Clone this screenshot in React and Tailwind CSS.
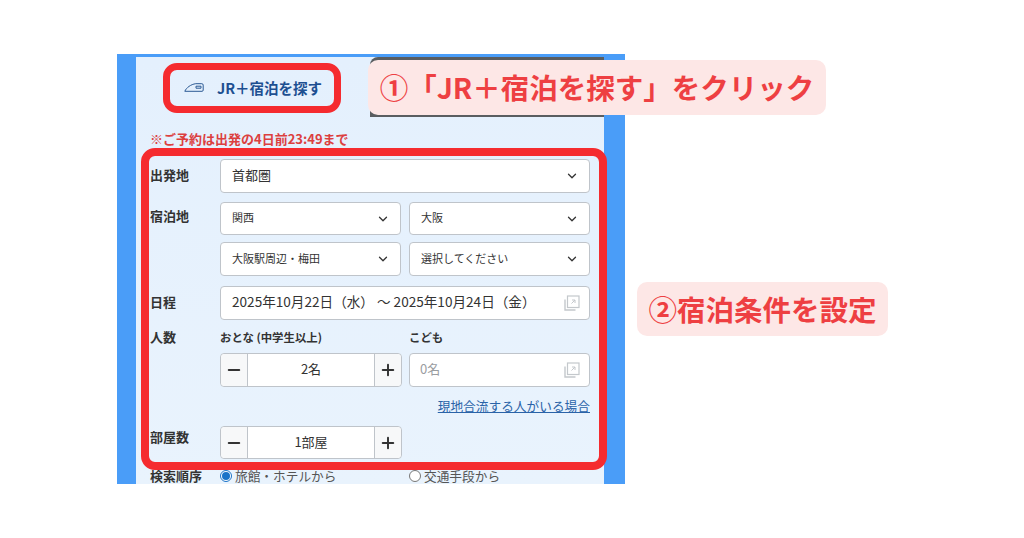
import { ChevronDown, Minus, Plus } from 'lucide-react'

const jp = 'font-["Noto_Sans_CJK_JP","Noto_Sans",sans-serif]'

function Label({ children, className = '' }) {
  return <div className={`w-[70px] shrink-0 text-[13px] font-bold leading-none text-[#333] ${className}`}>{children}</div>
}

function Select({ value, className = '', text = 'text-[11px]' }) {
  return (
    <div className={`flex items-center justify-between rounded-[4px] border border-[#bfc4ca] bg-white pl-[11px] pr-[10px] ${text} text-[#333] ${className}`}>
      <span className="pb-[2px]">{value}</span>
      <ChevronDown className="h-[14px] w-[14px] text-[#333]" strokeWidth={2.2} />
    </div>
  )
}

function CopyIcon() {
  return (
    <svg viewBox="0 0 16 16" className="h-[16px] w-[16px] text-[#c4c8cc]" fill="none" stroke="currentColor" strokeWidth="1">
      <path d="M1 4.500v10.500h10.500" strokeWidth="1.400" />
      <rect x="3.500" y="1" width="11.500" height="11.500" strokeWidth="1.200" />
      <path d="M7.500 8.500l3.500-3.500M8 5h3v3" />
    </svg>
  )
}

function Stepper({ value, height = 'h-[34px]' }) {
  return (
    <div className={`flex w-[182px] items-stretch rounded-[4px] border border-[#bfc4ca] bg-white text-[13px] text-[#333] ${height}`}>
      <div className="flex w-[27px] items-center justify-center rounded-l-[4px] border-r border-[#bfc4ca] bg-[#f7f8f9]">
        <Minus className="h-[18px] w-[18px] text-[#333]" strokeWidth={2.6} />
      </div>
      <div className="flex flex-1 items-center justify-center pb-[2px]">{value}</div>
      <div className="flex w-[27px] items-center justify-center rounded-r-[4px] border-l border-[#bfc4ca] bg-[#f7f8f9]">
        <Plus className="h-[18px] w-[18px] text-[#333]" strokeWidth={2.6} />
      </div>
    </div>
  )
}

export default function App() {
  return (
    <div className={`relative h-[538px] w-[1024px] overflow-hidden bg-white pl-[117px] pt-[54px] ${jp}`}>
      {/* Screenshot panel */}
      <div className="h-[430px] w-[508px] overflow-hidden border-x-[19px] border-t-[3px] border-r-[21px] border-x-[#4a9df8] border-t-[#4a9df8] bg-gradient-to-b from-[#e4f0fd] to-[#e9f3fd]">
        {/* Tabs */}
        <div className="flex h-[60px]">
          <div className="flex w-[234px] items-center justify-center gap-[13px] pt-[1px]">
            <svg viewBox="0 0 20 9" className="h-[9px] w-[20px] text-[#2c5a94]" fill="none" stroke="currentColor" strokeWidth="1">
              <path d="M.8 8.300c1.500-3.500 6-7 11-7.600h6c.9 0 1.400.5 1.400 1.400v5c0 .7-.4 1.200-1.200 1.200z" />
              <path d="M12 3.200h5v2h-5z" />
            </svg>
            <span className="text-[14.500px] font-bold text-[#1d4f91]">JR＋宿泊を探す</span>
          </div>
          <div className="flex-1 rounded-tl-[8px] bg-[#5a5d60]" />
        </div>

        <div className="pl-[14px] pt-[15px] text-[13px] font-bold leading-[14px] text-[#dc3f3f]">※ご予約は出発の4日前23:49まで</div>

        {/* Form */}
        <div className="px-[14px] pt-[13px]">
          <div className="flex items-center">
            <Label className="pb-[3px]">出発地</Label>
            <Select value="首都圏" text="text-[13px]" className="h-[34px] flex-1" />
          </div>
          <div className="mt-[9px] flex">
            <Label className="pt-[7px]">宿泊地</Label>
            <div className="grid flex-1 grid-cols-2 gap-x-[8px] gap-y-[7px]">
              <Select value="関西" className="h-[33px]" />
              <Select value="大阪" className="h-[33px]" />
              <Select value="大阪駅周辺・梅田" className="h-[34px]" />
              <Select value="選択してください" className="h-[34px]" />
            </div>
          </div>
          <div className="mt-[10px] flex items-center">
            <Label className="pb-[3px]">日程</Label>
            <div className="flex h-[34px] flex-1 items-center justify-between rounded-[4px] border border-[#bfc4ca] bg-white pl-[11px] pr-[9px] text-[13.600px] text-[#333]">
              <span className="pb-[3px]">2025年10月22日（水） ～ 2025年10月24日（金）</span>
              <CopyIcon />
            </div>
          </div>
          <div className="mt-[10px] flex">
            <Label>人数</Label>
            <div className="flex-1">
              <div className="grid grid-cols-2 gap-x-[8px]">
                <div>
                  <div className="text-[11.400px] font-bold leading-[14px] text-[#333]">おとな (中学生以上)</div>
                  <div className="mt-[9px]"><Stepper value="2名" /></div>
                </div>
                <div>
                  <div className="text-[11.400px] font-bold leading-[14px] text-[#333]">こども</div>
                  <div className="mt-[9px] flex h-[34px] items-center justify-between rounded-[4px] border border-[#bfc4ca] bg-white pl-[10px] pr-[9px] text-[13px] text-[#9a9da1]">
                    <span className="pb-[2px]">0名</span>
                    <CopyIcon />
                  </div>
                </div>
              </div>
              <div className="mt-[11px] text-right text-[12.700px] leading-[16px] text-[#2a63a8] underline">現地合流する人がいる場合</div>
            </div>
          </div>
          <div className="mt-[12px] flex items-center">
            <Label className="pb-[13px]">部屋数</Label>
            <Stepper value="1部屋" height="h-[33px]" />
          </div>
          <div className="mt-[9px] flex items-center">
            <Label className="pb-[2px]">検索順序</Label>
            <div className="grid flex-1 grid-cols-2 gap-x-[8px] text-[12.700px] leading-[16px] text-[#555]">
              <div className="flex items-center gap-[3px]">
                <span className="flex h-[12px] w-[12px] items-center justify-center rounded-full border border-[#1a73c8] bg-white">
                  <span className="h-[8px] w-[8px] rounded-full bg-[#1a73c8]" />
                </span>
                旅館・ホテルから
              </div>
              <div className="flex items-center gap-[3px]">
                <span className="h-[12px] w-[12px] rounded-full border border-[#777] bg-white" />
                交通手段から
              </div>
            </div>
          </div>
        </div>
      </div>

      {/* Annotations */}
      <div className="absolute left-[163px] top-[63px] h-[50px] w-[178px] rounded-[14px] border-[7px] border-[#f52b2f]" />
      <div className="absolute left-[141px] top-[148px] h-[322px] w-[466px] rounded-[14px] border-[8px] border-[#f52b2f]" />
      <div className="absolute left-[368px] top-[60px] flex h-[55px] w-[458px] items-center justify-center rounded-[10px] bg-[#fde7e6] text-[28.500px] font-bold text-[#ee3f42]">
        ①「JR＋宿泊を探す」をクリック
      </div>
      <div className="absolute left-[637px] top-[282px] flex h-[54px] w-[251px] items-center justify-center rounded-[10px] bg-[#fde7e6] text-[28.500px] font-bold text-[#ee3f42]">
        ②宿泊条件を設定
      </div>
    </div>
  )
}
